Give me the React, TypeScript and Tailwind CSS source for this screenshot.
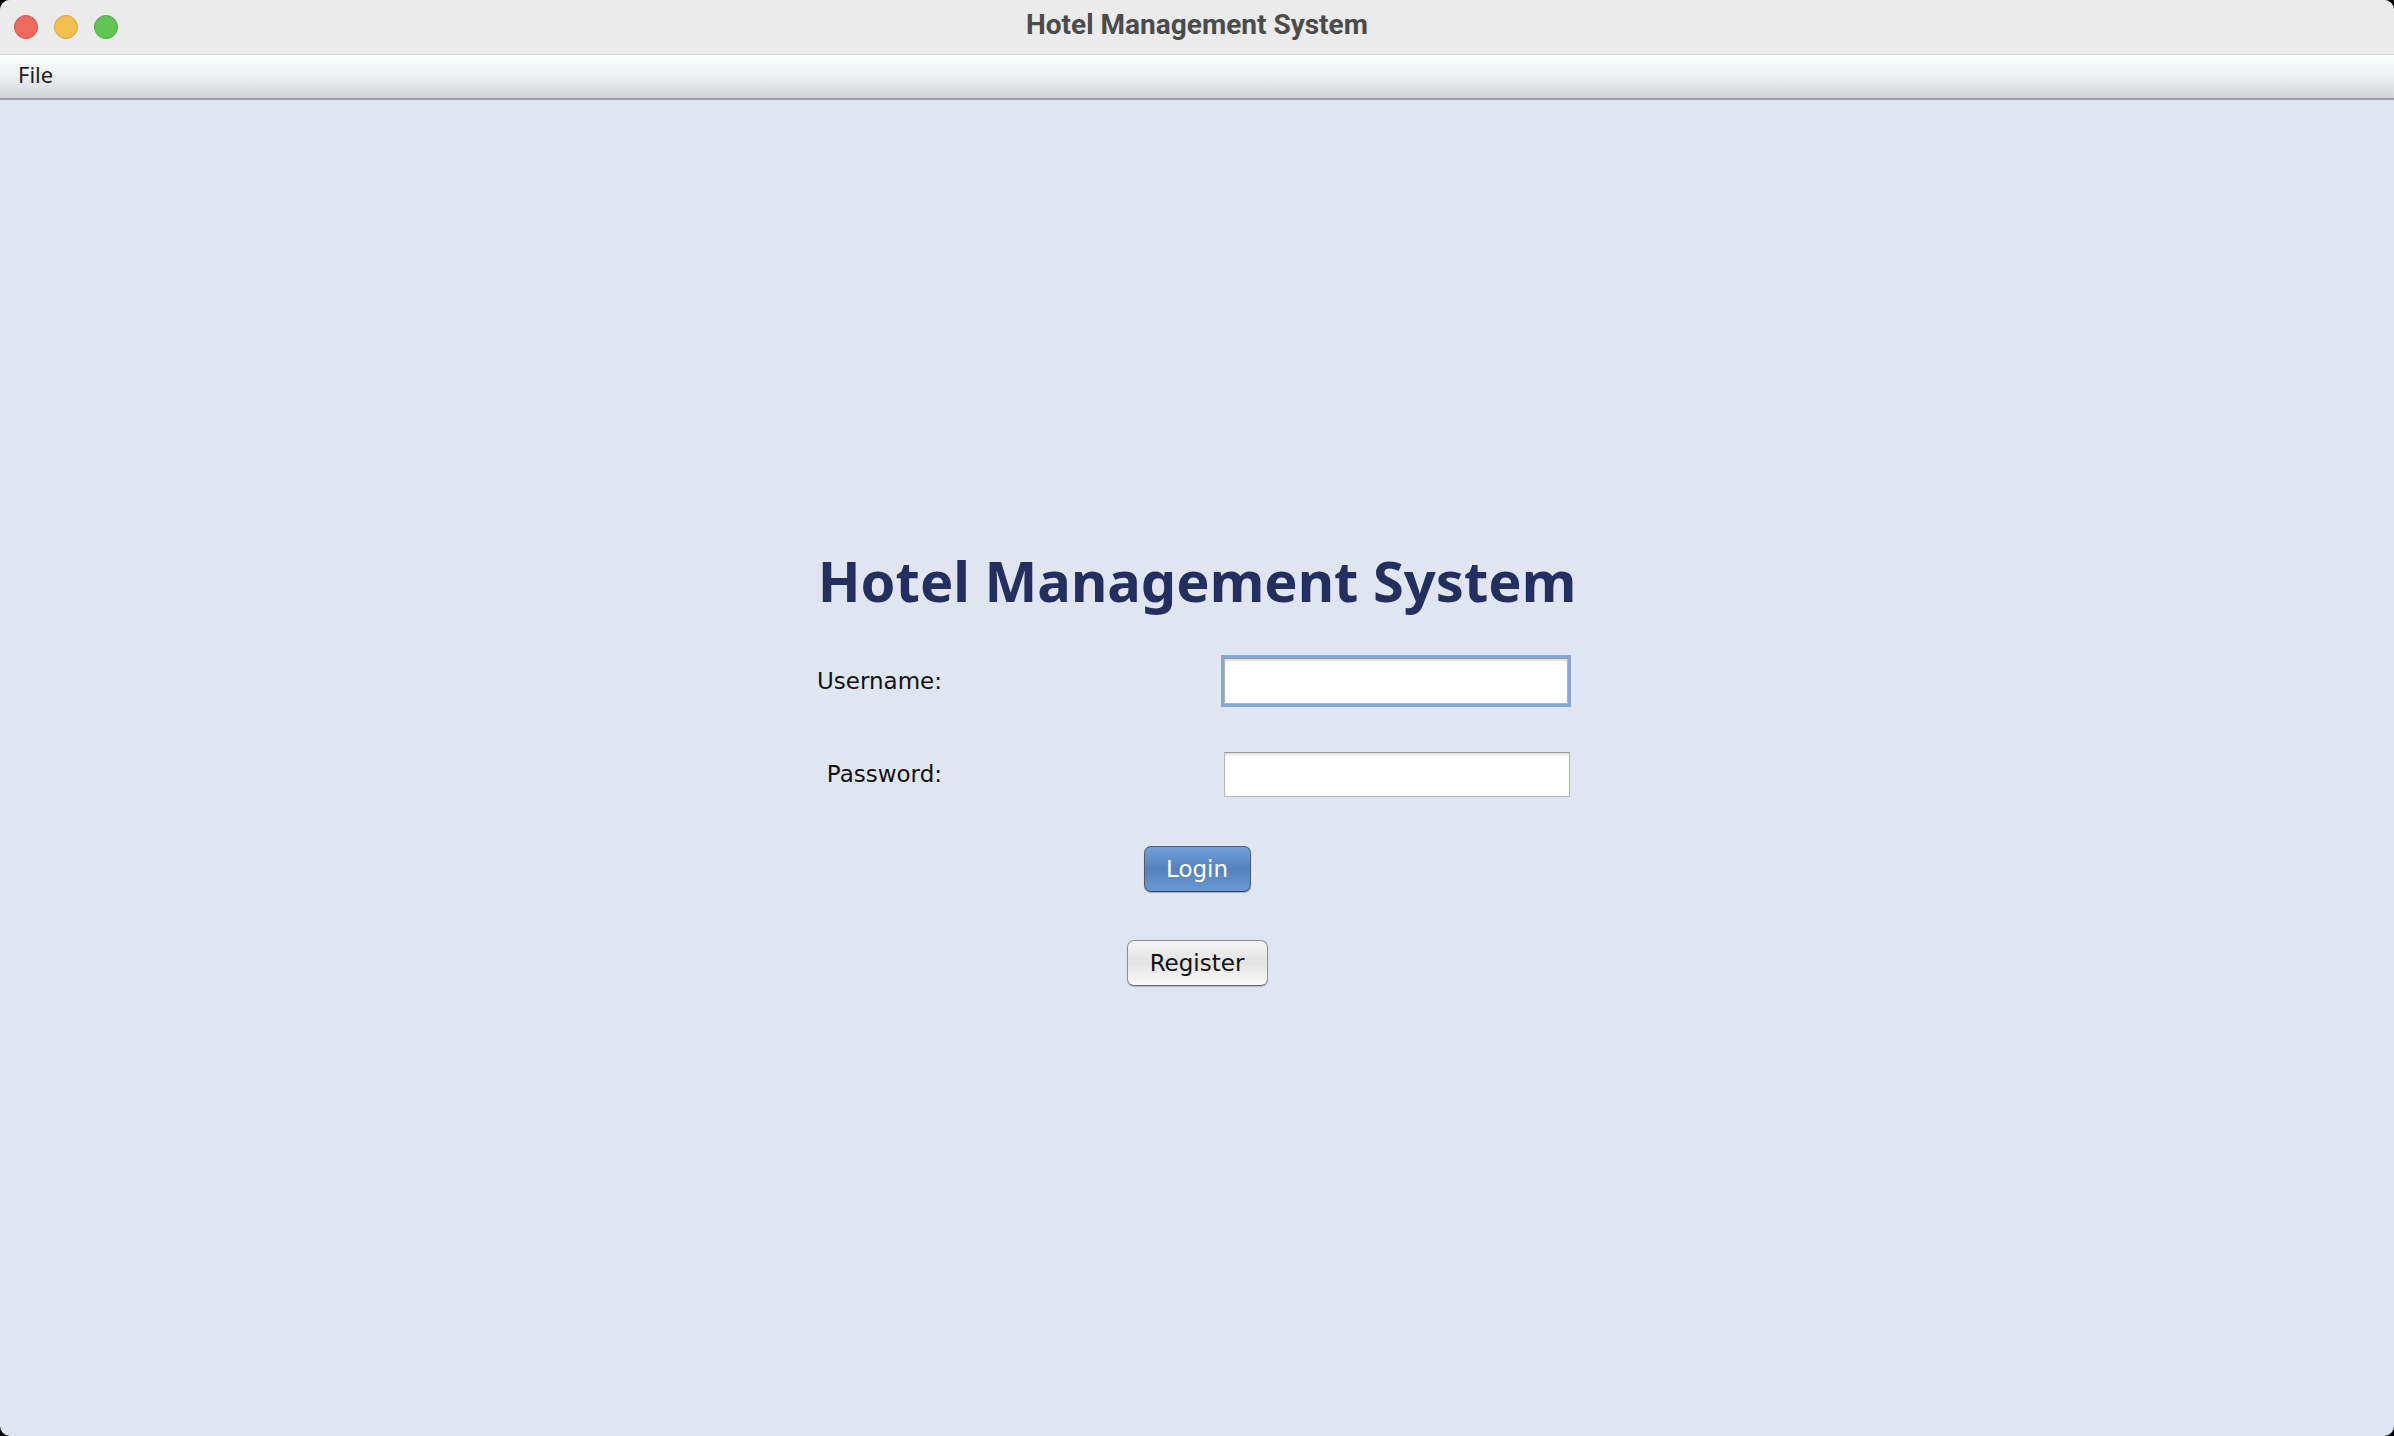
import React from "react";

export default function App() {
  return (
    <div className="w-screen h-screen bg-black">
      <div className="h-full rounded-[10px] overflow-hidden flex flex-col bg-[#dfe6f2]">
        {/* Title bar */}
        <div className="h-[55px] shrink-0 bg-[#ebebeb] border-b border-[#d3d3d3] grid grid-cols-[1fr_auto_1fr] items-center">
          <div className="flex items-center gap-[16px] pl-[14px]">
            <span className="w-[24px] h-[24px] rounded-full bg-[#ee6a5f] border border-[#d8564c]" />
            <span className="w-[24px] h-[24px] rounded-full bg-[#f5bf4f] border border-[#d9a441]" />
            <span className="w-[24px] h-[24px] rounded-full bg-[#61c454] border border-[#4ea843]" />
          </div>
          <div className="font-['Roboto',sans-serif] font-bold text-[28px] text-[#4b4b4b] leading-none pb-[4px]">
            Hotel Management System
          </div>
          <div />
        </div>

        {/* Menu bar */}
        <div className="h-[45px] shrink-0 border-b-2 border-[#9a9ea6] bg-gradient-to-b from-[#fbfcfc] via-[#eeeff1] to-[#d4d5d9] flex items-center pl-[18px] pb-[5px]">
          <span className="font-['Noto_Sans',sans-serif] text-[22px] text-[#1e1e1e] leading-none">File</span>
        </div>

        {/* Content */}
        <div className="flex-1 flex flex-col items-center pt-[452px]">
          <h1 className="font-['Noto_Sans',sans-serif] font-bold text-[56px] leading-[56px] text-[#23305f] whitespace-nowrap">
            Hotel Management System
          </h1>

          <div className="w-[746px] mt-[50px] flex flex-col font-['DejaVu_Sans',sans-serif] text-[23px] text-[#111]">
            <div className="flex items-center h-[46px]">
              <div className="w-[118px] flex justify-end whitespace-nowrap">
                <span>Username:</span>
              </div>
              <div className="ml-auto w-[344px] h-[46px] mr-[2px] bg-white border border-[#b4b4b4] border-t-[#979797] shadow-[0_0_0_3px_#84a8d6,inset_0_2px_2px_rgba(0,0,0,0.12)]" />
            </div>
            <div className="flex items-center h-[45px] mt-[48px]">
              <div className="w-[118px] flex justify-end whitespace-nowrap">
                <span>Password:</span>
              </div>
              <div className="ml-auto w-[346px] h-[45px] bg-white border border-[#b6b6b6] border-t-[#9a9a9a] shadow-[inset_0_2px_2px_rgba(0,0,0,0.12)]" />
            </div>
          </div>

          <button className="mt-[49px] w-[107px] h-[46px] rounded-[7px] border border-[#525a68] border-b-[#3f4550] bg-gradient-to-b from-[#72a1dd] via-[#5581bf] to-[#6b97d1] text-white font-['DejaVu_Sans',sans-serif] text-[23px] leading-none shadow-[0_1px_1px_rgba(0,0,0,0.25)]">
            Login
          </button>

          <button className="mt-[48px] w-[141px] h-[46px] rounded-[7px] border border-[#8e8e8e] border-b-[#6c6c6c] bg-gradient-to-b from-[#f4f4f4] via-[#e3e3e3] to-[#fbfbfb] text-[#111] font-['DejaVu_Sans',sans-serif] text-[23px] leading-none shadow-[0_1px_1px_rgba(0,0,0,0.2)]">
            Register
          </button>
        </div>
      </div>
    </div>
  );
}
